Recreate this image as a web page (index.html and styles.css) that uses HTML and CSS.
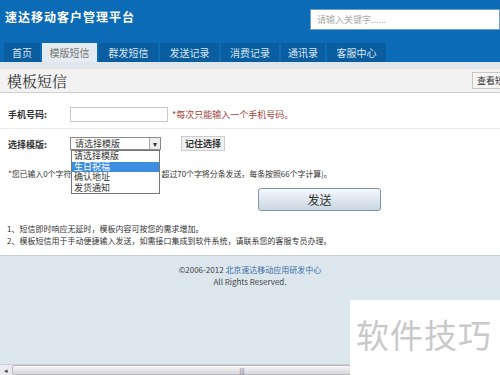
FILE: index.html
```html
<!DOCTYPE html>
<html lang="zh-CN">
<head>
  <meta charset="UTF-8">
  <title>速达移动客户管理平台</title>
  <link rel="stylesheet" href="styles.css">
</head>
<body>

  <div class="header">
    <div class="top">
      <div class="logo">速达移动客户管理平台</div>
      <input class="search" type="text" placeholder="请输入关键字......">
    </div>
    <div class="nav">
      <a class="tab" style="width:36px">首页</a>
      <a class="tab active" style="width:55px">模版短信</a>
      <a class="tab" style="width:59px">群发短信</a>
      <a class="tab" style="width:59px">发送记录</a>
      <a class="tab" style="width:58px">消费记录</a>
      <a class="tab" style="width:44px">通讯录</a>
      <a class="tab" style="width:59px">客服中心</a>
    </div>
  </div>

  <div class="strip"></div>

  <div class="panel">
    <div class="panel-title">
      <h2>模板短信</h2>
      <button class="view-btn">查看短信模板</button>
    </div>

    <div class="panel-body">
      <div class="row row-line">
        <label>手机号码:</label>
        <input class="phone" type="text">
        <span class="hint">*每次只能输入一个手机号码。</span>
      </div>

      <div class="row row-select">
        <label>选择模版:</label>
        <div class="select-wrap">
          <div class="select">
            <span>请选择模版</span>
            <span class="arrow">▾</span>
          </div>
          <ul class="options">
            <li>请选择模版</li>
            <li class="selected">生日祝福</li>
            <li>确认地址</li>
            <li>发货通知</li>
          </ul>
        </div>
        <button class="remember">记住选择</button>
      </div>

      <p class="count">*您已输入0个字符<span class="covered">(每条</span>短信按照70个计算，超过70个字将分条发送，每条按照66个字计算)。</p>

      <div class="send-row">
        <button class="send">发送</button>
      </div>

      <div class="notes">
        <p>1、短信即时响应无延时，模板内容可按您的需求增加。</p>
        <p>2、模板短信用于手动便捷输入发送，如需接口集成到软件系统，请联系您的客服专员办理。</p>
      </div>
    </div>
  </div>

  <div class="footer">
    <p>©2006-2012 <a>北京速达移动应用研发中心</a></p>
    <p>All Rights Reserved.</p>
  </div>

  <div class="scrollbar">
    <span class="sb-left">◂</span>
    <span class="sb-thumb"><span class="grip">|||</span></span>
  </div>

  <div class="watermark">软件技巧</div>

</body>
</html>
```

FILE: styles.css
```css
* {
  box-sizing: border-box;
}

body {
  margin: 0;
  width: 500px;
  height: 375px;
  overflow: hidden;
  display: flex;
  flex-direction: column;
  font-family: "Noto Sans CJK SC", "Liberation Sans", sans-serif;
  font-size: 9px;
  color: #333;
  background: #dce6ed;
  position: relative;
}

p {
  margin: 0;
}

.header {
  background: #0b6bb7;
}

.top {
  height: 43px;
  display: flex;
  align-items: center;
  justify-content: space-between;
  padding-left: 5px;
}

.logo {
  color: #fff;
  font-size: 12px;
  font-weight: bold;
  letter-spacing: 1px;
  margin-top: -10px;
}

.search {
  width: 190px;
  height: 21px;
  margin-top: -5px;
  border: 1px solid #6aa0cc;
  padding: 0 6px;
  font-family: inherit;
  font-size: 9px;
  color: #999;
}

.search::placeholder {
  color: #aaa;
}

.nav {
  height: 19px;
  display: flex;
  gap: 2px;
  padding-left: 4px;
}

.tab {
  display: flex;
  align-items: center;
  justify-content: center;
  background: #0a5d9f;
  color: #d8e6f2;
  font-size: 10px;
}

.tab.active {
  background: #e4ecf1;
  color: #777;
}

.strip {
  height: 6px;
  background: #dfe6ec;
}

.panel {
  background: #fff;
  border-bottom: 1px solid #c5ced6;
}

.panel-title {
  height: 25px;
  display: flex;
  align-items: center;
  justify-content: space-between;
  background: #f2f2f2;
  border-bottom: 1px solid #cfcfcf;
  border-top: 1px solid #e4e4e4;
  padding-left: 7px;
  overflow: hidden;
}

.panel-title h2 {
  margin: 0;
  font-family: "Noto Serif CJK SC", "Liberation Serif", serif;
  font-size: 15px;
  font-weight: normal;
  color: #333;
}

.view-btn {
  flex-shrink: 0;
  margin-right: -36px;
  height: 17px;
  padding: 0 4px;
  border: 1px solid #c8c8c8;
  background: #f4f4f4;
  font-family: inherit;
  font-size: 9px;
  color: #333;
}

.panel-body {
  padding: 7px 0 8px;
}

.row {
  display: flex;
  align-items: center;
  padding-left: 8px;
}

.row label {
  width: 62px;
  font-weight: bold;
  font-size: 9px;
}

.row-line {
  height: 29px;
  border-bottom: 1px solid #ececec;
}

.phone {
  width: 98px;
  height: 15px;
  border: 1px solid #c8c8c8;
}

.hint {
  margin-left: 4px;
  color: #a5453a;
  font-size: 9px;
}

.row-select {
  height: 30px;
  align-items: flex-start;
  padding-top: 8px;
}

.row-select label {
  margin-top: 1px;
}

.select-wrap {
  position: relative;
  width: 91px;
}

.select {
  height: 13px;
  border: 1px solid #8a8a8a;
  display: flex;
  align-items: center;
  justify-content: space-between;
  padding-left: 4px;
  font-size: 9px;
  color: #333;
  background: #fff;
}

.arrow {
  width: 11px;
  height: 11px;
  border-left: 1px solid #aaa;
  background: #eee;
  font-size: 8px;
  line-height: 11px;
  text-align: center;
}

.options {
  position: absolute;
  top: 13px;
  left: 1px;
  width: 89px;
  margin: 0;
  padding: 0;
  list-style: none;
  background: #fff;
  border: 1px solid #777;
  z-index: 2;
}

.options li {
  height: 10.5px;
  line-height: 10.5px;
  padding-left: 2px;
  font-size: 9px;
  color: #333;
}

.options li.selected {
  background: #3d8ee0;
  color: #fff;
}

.remember {
  margin-left: 20px;
  margin-top: -1px;
  height: 15px;
  padding: 0 3px;
  border: 1px solid #ccc;
  background: #f0f0f0;
  font-family: inherit;
  font-size: 9px;
  font-weight: bold;
  color: #333;
}

.count {
  padding-left: 8px;
  margin-top: 9px;
  font-size: 8px;
  letter-spacing: -0.1px;
}

.covered {
  visibility: hidden;
}

.send-row {
  padding-left: 258px;
  margin-top: 9px;
}

.send {
  width: 123px;
  height: 23px;
  border: 1px solid #7c96ab;
  border-radius: 3px;
  background: linear-gradient(#f4f8fb, #c9d7e1);
  font-family: inherit;
  font-size: 12px;
  color: #333;
}

.notes {
  padding-left: 7px;
  margin-top: 12px;
  font-size: 8px;
  line-height: 12px;
}

.footer {
  flex: 1;
  padding-top: 8px;
  text-align: center;
  font-size: 8px;
  line-height: 12px;
  color: #444;
}

.footer a {
  color: #3a6ea5;
}

.scrollbar {
  height: 11px;
  display: flex;
  background: #e9e9ee;
  border-top: 1px solid #cfcfd6;
}

.sb-left {
  width: 12px;
  font-size: 7px;
  line-height: 10px;
  text-align: center;
  color: #444;
}

.sb-thumb {
  width: 440px;
  background: linear-gradient(#f7f5f7, #d8d6dc);
  border: 1px solid #b9b9c0;
  border-radius: 2px;
  display: flex;
  justify-content: center;
  align-items: center;
  font-size: 6px;
  color: #555;
}

.grip {
  margin-left: 20px;
}

.watermark {
  position: absolute;
  left: 350px;
  top: 300px;
  width: 150px;
  height: 75px;
  background: #fff;
  color: #c9c9c9;
  font-size: 33px;
  letter-spacing: 1px;
  padding: 10px 0 0 6px;
}
```
